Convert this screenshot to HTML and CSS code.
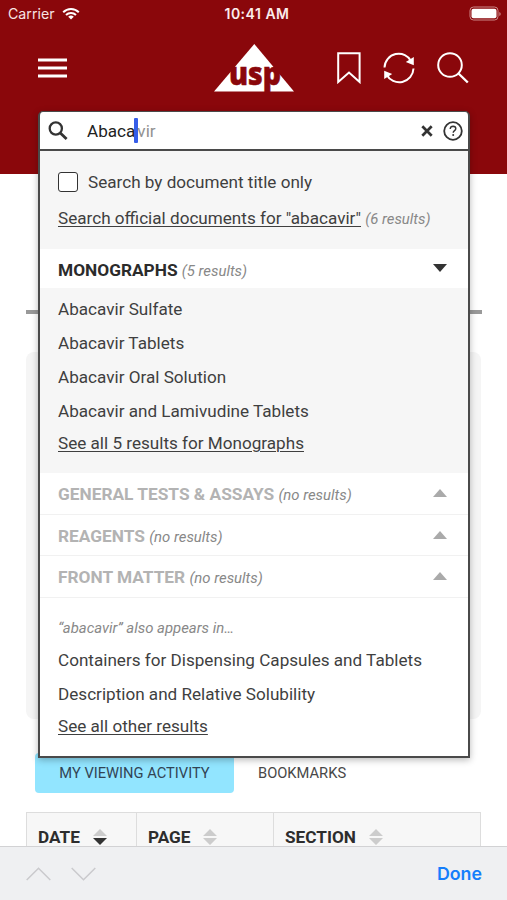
FILE: index.html
```html
<!DOCTYPE html>
<html lang="en">
<head>
<meta charset="utf-8">
<title>USP search</title>
<link rel="stylesheet" href="styles.css">
</head>
<body>
<div class="app">
  <header class="header">
    <div class="status">
      <div class="carrier"><span>Carrier</span>
        <svg width="18" height="13" viewBox="0 0 18 13"><g fill="none" stroke="#fff" stroke-width="2"><path d="M1.2 5.2a11 11 0 0 1 15.6 0"/><path d="M4 8a7.100 7.100 0 0 1 10 0"/></g><path d="M9 12.500L6.200 9.800a4 4 0 0 1 5.600 0z" fill="#fff"/></svg>
      </div>
      <span class="clock">10:41 AM</span>
      <svg class="battery" width="34" height="16" viewBox="0 0 34 16"><rect x="1" y="1" width="28" height="13" rx="3.500" fill="none" stroke="#c88" stroke-width="1"/><rect x="2.500" y="2.700" width="25" height="9.600" rx="2" fill="#fff"/><path d="M30.300 6v4q1.400-.7 1.400-2t-1.400-2z" fill="#c88"/></svg>
    </div>
    <nav class="nav">
      <svg class="burger" width="29" height="20" viewBox="0 0 29 20"><path d="M0 2h29M0 10h29M0 18h29" stroke="#fff" stroke-width="3"/></svg>
      <svg class="logo" width="80" height="50" viewBox="0 0 80 50"><path d="M40.300 1L80 48.500H0z" fill="#fff"/><text x="15" y="41.500" textLength="52" lengthAdjust="spacingAndGlyphs" class="logo-text">usp</text></svg>
      <div class="actions">
        <svg width="24" height="32" viewBox="0 0 24 32"><path d="M1.200 1.200h21.400v28.800L12 20.600 1.200 30z" fill="none" stroke="#fff" stroke-width="2"/></svg>
        <svg width="32" height="32" viewBox="0 0 32 32"><g fill="none" stroke="#fff" stroke-width="2"><path d="M1.500 15.500A14.300 14.300 0 0 1 28.500 9.500"/><path d="M30.500 16.500A14.300 14.300 0 0 1 3.500 22.500"/></g><path d="M30.800 5v8.200l-8-3.200zM1.200 27v-8.200l8 3.200z" fill="#fff"/></svg>
        <svg width="32" height="32" viewBox="0 0 32 32"><circle cx="13" cy="13" r="11.800" fill="none" stroke="#fff" stroke-width="2"/><path d="M21.500 21.500l9.300 9" stroke="#fff" stroke-width="2.400"/></svg>
      </div>
    </nav>
  </header>

  <main class="page">
    <hr class="rule">
    <div class="card"></div>
    <div class="tabs">
      <span class="tab tab-active">MY VIEWING ACTIVITY</span>
      <span class="tab">BOOKMARKS</span>
    </div>
    <div class="table">
      <div class="cell"><span>DATE</span><svg width="14" height="16" viewBox="0 0 14 16"><path d="M0 7l7-7 7 7z" fill="#ccc"/><path d="M0 9l7 7 7-7z" fill="#333"/></svg></div>
      <div class="cell"><span>PAGE</span><svg width="14" height="16" viewBox="0 0 14 16"><path d="M0 7l7-7 7 7zM0 9l7 7 7-7z" fill="#ccc"/></svg></div>
      <div class="cell"><span>SECTION</span><svg width="14" height="16" viewBox="0 0 14 16"><path d="M0 7l7-7 7 7zM0 9l7 7 7-7z" fill="#ccc"/></svg></div>
    </div>
  </main>

  <footer class="keybar">
    <svg width="70" height="14" viewBox="0 0 70 14"><path d="M.7 13L12.500 1.200 24.300 13M45.700 1L57.500 12.800 69.300 1" fill="none" stroke="#cacacd" stroke-width="1.500"/></svg>
    <span class="done">Done</span>
  </footer>

  <section class="search">
    <div class="field">
      <svg width="20" height="20" viewBox="0 0 20 20"><circle cx="7.800" cy="7.500" r="6.100" fill="none" stroke="#333" stroke-width="2.300"/><path d="M12.300 12l6.300 6" stroke="#333" stroke-width="2.800"/></svg>
      <div class="query"><span>Abaca</span><i class="caret"></i><span class="hint">vir</span></div>
      <svg width="12" height="12" viewBox="0 0 12 12"><path d="M1.300 1.300l9.400 9.400M10.700 1.300l-9.400 9.400" stroke="#333" stroke-width="2.700"/></svg>
      <svg class="help" width="20" height="20" viewBox="0 0 20 20"><circle cx="10" cy="10" r="8.800" fill="none" stroke="#333" stroke-width="1.800"/><path d="M7.200 8q.2-2.700 2.900-2.700 2.700.1 2.700 2.400c0 1.800-2.600 2-2.600 4" fill="none" stroke="#333" stroke-width="1.400"/><circle cx="10.200" cy="14" r="1" fill="#333"/></svg>
    </div>
    <div class="scope">
      <label class="check"><i class="box"></i><span>Search by document title only</span></label>
      <div class="official"><a>Search official documents for "abacavir"</a> <em>(6 results)</em></div>
    </div>
    <div class="group group-open"><span><b>MONOGRAPHS</b> <em>(5 results)</em></span><i class="down"></i></div>
    <div class="results">
      <div>Abacavir Sulfate</div>
      <div>Abacavir Tablets</div>
      <div>Abacavir Oral Solution</div>
      <div>Abacavir and Lamivudine Tablets</div>
      <a>See all 5 results for Monographs</a>
    </div>
    <div class="group"><span><b>GENERAL TESTS &amp; ASSAYS</b> <em>(no results)</em></span><i class="up"></i></div>
    <div class="group"><span><b>REAGENTS</b> <em>(no results)</em></span><i class="up"></i></div>
    <div class="group"><span><b>FRONT MATTER</b> <em>(no results)</em></span><i class="up"></i></div>
    <div class="also">
      <em>“abacavir” also appears in…</em>
      <div>Containers for Dispensing Capsules and Tablets</div>
      <div>Description and Relative Solubility</div>
      <a>See all other results</a>
    </div>
  </section>
</div>
</body>
</html>
```
FILE: styles.css
```css
* { box-sizing: border-box; }
body { margin: 0; font-family: Roboto, "Liberation Sans", sans-serif; color: #3f3f3f; }
svg { display: block; flex: none; }
.app { position: relative; width: 507px; height: 900px; overflow: hidden; background: #fff; display: flex; flex-direction: column; }

.header { height: 174px; flex: none; background: #8a070b; }
.status { height: 27px; display: grid; grid-template-columns: 1fr auto 1fr; align-items: center; padding: 0 4px 0 8px; color: #fff; font: 14.200px/27px Inter, sans-serif; }
.carrier { display: flex; align-items: center; gap: 7px; color: #f7e4e4; }
.clock { font-weight: 600; font-size: 14px; letter-spacing: .5px; margin-left: 3px; color: #fbecec; }
.battery { justify-self: end; }
.nav { display: flex; align-items: center; height: 82px; padding: 0 38px; }
.logo { margin-left: 147px; }
.logo-text { font: 800 31px "Open Sans", sans-serif; fill: #8a070b; stroke: #8a070b; stroke-width: .6; }
.actions { display: flex; margin-left: auto; gap: 22px; }

.page { flex: 1; padding: 136px 26px 0; min-height: 0; overflow: hidden; }
.rule { margin: 0 -1px 0 0; height: 4px; border: 0; background: #999; }
.card { height: 367px; margin-top: 38px; border-radius: 8px; background: #f5f5f5; }
.tabs { display: flex; gap: 24px; margin: 34px 0 19px 9px; }
.tab { height: 40px; line-height: 41px; font-size: 14.700px; color: #484848; }
.tab-active { width: 199px; text-align: center; background: #92e5ff; border-radius: 4px; color: #345; }
.table { display: grid; grid-template-columns: 110px 137px 208px; height: 60px; border: 1px solid #ddd; border-width: 1px 1px 0; background: #f7f7f7; }
.cell { display: flex; align-items: center; gap: 13px; height: 48px; padding-left: 11px; border-right: 1px solid #ddd; font-size: 17.200px; font-weight: 700; color: #2d2d2d; }
.cell:last-child { border: 0; }
.keybar { position: absolute; left: 0; bottom: 0; width: 100%; height: 54px; display: flex; justify-content: space-between; align-items: center; padding: 0 25px 0 26px; background: #eff0f2; border-top: 1px solid #d2d2d4; }
.done { font: 600 17.800px Inter, sans-serif; color: #157efb; }

.search { position: absolute; left: 38px; top: 111px; width: 432px; height: 647px; border: 2px solid #4a4a4a; border-top-width: 1px; border-radius: 5px 5px 0 0; background: #fff; box-shadow: 0 2px 7px rgba(0,0,0,.28); font-size: 17.130px; }
.field { display: flex; align-items: center; height: 39px; padding: 0 5px 0 8px; border-bottom: 2px solid #4a4a4a; border-radius: 4px 4px 0 0; }
.query { display: flex; align-items: center; flex: 1; margin-left: 19px; color: #222; }
.caret { width: 4px; height: 25px; margin: 0 -1px; border-radius: 1px; background: #365de8; }
.hint { color: #929292; }
.help { margin-left: 10px; }
.scope { height: 98px; padding: 13px 18px 0; background: #f6f6f6; }
.check { display: flex; align-items: center; gap: 10px; height: 35px; }
.box { width: 20px; height: 20px; border: 1.500px solid #333; border-radius: 3px; background: #fff; }
.official { line-height: 39px; white-space: nowrap; }
a { text-decoration: underline; text-decoration-thickness: 1px; text-underline-offset: 2px; }
em { color: #888; font-size: 14.900px; }
.group { display: flex; justify-content: space-between; align-items: center; height: 41.500px; padding: 2px 21px 0 18px; border-bottom: 1px solid #f1f1f1; white-space: nowrap; }
.group b { color: #b3b3b3; font-weight: 700; font-size: 17.300px; }
.group-open { height: 39px; border: 0; }
.group-open b { color: #2b2b2b; }
.down, .up { border: 7px solid transparent; border-bottom: 0; border-top: 8px solid #333; }
.down { margin-top: -4px; }
.up { border: 7px solid transparent; border-top: 0; border-bottom: 8px solid #aaa; margin-top: -2px; }
.results { height: 185px; padding: 4px 18px 0; background: #f6f6f6; line-height: 34px; }
.results a, .also a { display: block; line-height: 30px; }
.also { padding: 14px 18px 0; line-height: 34px; white-space: nowrap; }
.also em { display: block; line-height: 32px; margin-bottom: -1px; }
```
